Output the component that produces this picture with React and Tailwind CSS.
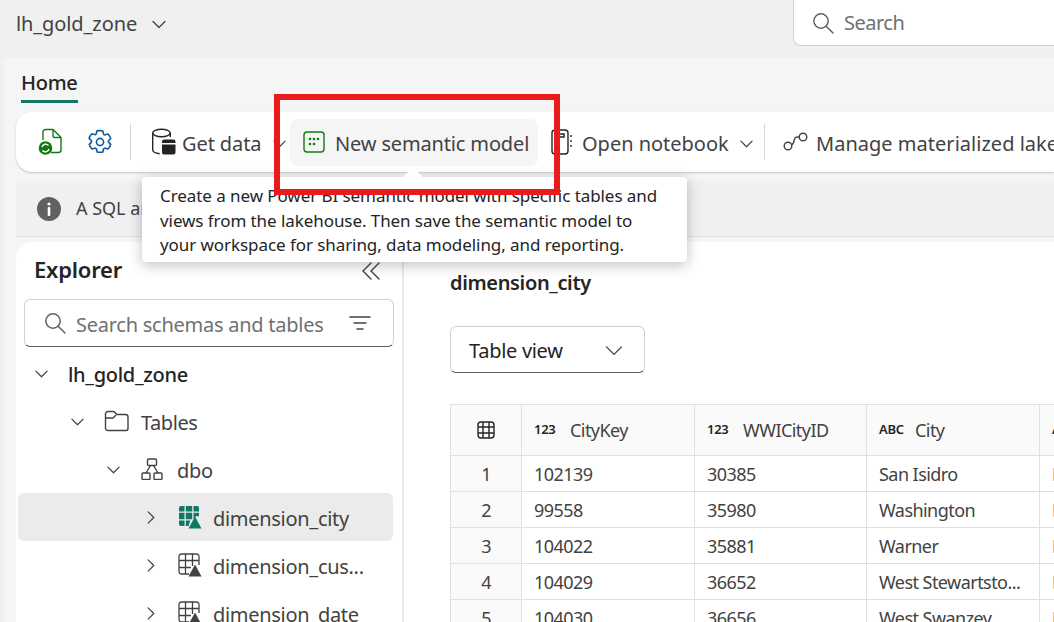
import React from "react";

const F = { fontFamily: '"Noto Sans", "Open Sans", sans-serif' };

function Chevron({ dir = "down", size = 16, className = "", sw = 1.3 }) {
  const d = { down: "M2 5.5l6 6 6-6", right: "M5.5 2l6 6-6 6" }[dir];
  return (
    <svg width={size} height={size} viewBox="0 0 16 16" fill="none" stroke="currentColor" strokeWidth={sw} className={className}>
      <path d={d} strokeLinecap="round" strokeLinejoin="round" />
    </svg>
  );
}

function SearchIcon({ className = "" }) {
  return (
    <svg width="22" height="22" viewBox="0 0 22 22" fill="none" stroke="#616161" strokeWidth="1.5" className={className}>
      <circle cx="9" cy="9" r="7.2" />
      <path d="M14.2 14.2L21 21" strokeLinecap="round" />
    </svg>
  );
}

function TableTri({ active }) {
  const c = active ? "#117865" : "#424242";
  return (
    <svg width="24" height="24" viewBox="0 0 24 24" className="shrink-0">
      {active ? (
        <g fill={c}>
          <path d="M1 3a2 2 0 012-2h3.500v5.500H1zM7.800 1h6.400v5.500H7.800zM15.500 1H19a2 2 0 012 2v3.500h-5.500zM1 7.800h5.500v6.400H1zM7.800 7.800h6.400v6.400H7.800zM15.500 7.800H21v3.500h-3l-2.500 3zM1 15.500h5.500V21H3a2 2 0 01-2-2zM7.800 15.500h4.500L10.500 21H7.800z" />
        </g>
      ) : (
        <g fill="none" stroke={c} strokeWidth="1.300">
          <path d="M11 21H3.500A2.500 2.500 0 011 18.500v-15A2.500 2.500 0 013.500 1h15A2.500 2.500 0 0121 3.500V12" />
          <path d="M1 7.500h20M1 14.500h12M7.500 1v20M14.500 1v12" />
        </g>
      )}
      <path d="M17 11.500l6.500 12h-13z" fill={c} />
    </svg>
  );
}

function TreeRow({ pad, children, selected }) {
  return (
    <div className={`flex h-12 shrink-0 items-center rounded-md ${selected ? "bg-[#ebebeb]" : ""}`} style={{ paddingLeft: pad }}>
      {children}
    </div>
  );
}

function HeadCell({ w, type, label }) {
  return (
    <div className="flex h-full shrink-0 items-center border-r border-[#e0e0e0] pl-[12px]" style={{ width: w }}>
      <span className="w-[36px] text-[13px] font-semibold tracking-[-0.3px] text-[#242424]">{type}</span>
      <span className="text-[18px] tracking-[-0.55px] text-[#424242]">{label}</span>
    </div>
  );
}

function Row({ n, a, b, c }) {
  return (
    <div className="flex h-9 shrink-0 border-b border-[#e0e0e0] text-[18px] tracking-[-0.55px] text-[#424242]">
      <div className="flex w-[71px] shrink-0 items-center justify-center border-r border-[#e0e0e0] bg-[#fafafa] pt-[2px]">{n}</div>
      <div className="flex w-[173px] shrink-0 items-center border-r border-[#e0e0e0] pl-[12px] pt-[2px]">{a}</div>
      <div className="flex w-[172px] shrink-0 items-center border-r border-[#e0e0e0] pl-[12px] pt-[2px]">{b}</div>
      <div className="flex w-[173px] shrink-0 items-center border-r border-[#e0e0e0] pl-[12px] pt-[2px]">{c}</div>
      <div className="flex flex-1 items-center pl-[12px] pt-[2px]">P</div>
    </div>
  );
}

export default function App() {
  return (
    <div className="relative h-[622px] w-[1054px] overflow-hidden bg-[#f0f0f0]" style={F}>
      {/* Top bar */}
      <header className="flex h-[58px] items-start justify-between">
        <div className="flex items-center pl-4 pt-[9px] text-[#424242]">
          <span className="text-[20px] tracking-[-0.1px]">lh_gold_zone</span>
          <Chevron className="ml-[14px] text-[#424242]" />
        </div>
        <div className="flex h-[46px] w-[261px] items-center rounded-bl-lg border-b border-l border-[#d1d1d1] bg-white pl-[18px]">
          <SearchIcon />
          <span className="ml-[10px] pt-[1px] text-[20px] tracking-[-0.5px] text-[#707070]">Search</span>
        </div>
      </header>

      {/* Workspace */}
      <div className="ml-1 h-[564px] bg-[#f5f5f5] pl-3">
        <div className="ml-[5px] h-[54px] pt-[10px]">
          <div className="inline-block h-[35px] border-b-[3px] border-[#117865] text-[20px] font-medium leading-[29px] tracking-[-0.25px] text-[#242424]">Home</div>
        </div>

        {/* Toolbar */}
        <div className="flex h-[60px] items-center overflow-hidden rounded-l-2xl bg-white pl-[22px] text-[#424242] shadow-[0_1px_2px_rgba(0,0,0,0.2)]">
          <svg width="24" height="28" viewBox="0 0 24 28" fill="none" className="shrink-0">
            <path d="M5 12V4a2.500 2.500 0 012.500-2.500H15l8 8V22a2.500 2.500 0 01-2.500 2.500H13" stroke="#107c10" strokeWidth="1.400" />
            <path d="M15 1.500V8a1.500 1.500 0 001.500 1.500H23" stroke="#107c10" strokeWidth="1.400" />
            <circle cx="7.500" cy="20" r="6.800" fill="#107c10" />
            <path d="M4 19a3.700 3.700 0 016.500-1.500M11 21a3.700 3.700 0 01-6.500 1.500" stroke="#fff" strokeWidth="1.400" fill="none" />
          </svg>
          <svg width="26" height="26" viewBox="0 0 24 24" fill="none" stroke="#0f5c9c" strokeWidth="1.500" strokeLinejoin="round" className="ml-[25px] shrink-0">
            <circle cx="12" cy="12" r="3.300" />
            <path d="M12 1.500c.9 0 1.800.1 2.600.3l.6 2.500c.2.700 1 1.200 1.700 1l2.500-.7c1.100 1.200 2 2.600 2.500 4.200l-1.800 1.800c-.5.500-.5 1.300 0 1.800l1.800 1.800c-.5 1.600-1.400 3-2.500 4.200l-2.500-.7c-.7-.2-1.500.3-1.700 1l-.6 2.500c-1.700.4-3.500.4-5.200 0l-.6-2.500c-.2-.7-1-1.200-1.700-1l-2.500.7c-1.100-1.200-2-2.600-2.500-4.200l1.800-1.800c.5-.5.5-1.300 0-1.800L1.900 8.600c.5-1.600 1.400-3 2.500-4.200l2.500.7c.7.2 1.500-.3 1.700-1l.6-2.500c.8-.2 1.700-.1 2.800-.1z" />
          </svg>
          <div className="ml-[17px] h-9 w-px shrink-0 bg-[#d6d6d6]" />
          <svg width="26" height="28" viewBox="0 0 26 28" className="ml-5 shrink-0">
            <g fill="none" stroke="#242424" strokeWidth="1.400">
              <ellipse cx="10.500" cy="5" rx="8.800" ry="3.800" />
              <path d="M1.700 5v17c0 1.800 2.500 3.200 7 3.700M19.300 5v4" />
            </g>
            <path d="M11 13.500a2 2 0 012-2h9.500a2 2 0 012 2V15H11zM11 16.500h13.500v8a2 2 0 01-2 2H13a2 2 0 01-2-2z" fill="#242424" />
          </svg>
          <span className="ml-[5px] w-[78px] shrink-0 whitespace-nowrap pt-[3px] text-[20px] tracking-[-0.1px]">Get data</span>
          <Chevron size={15} className="ml-3 mt-[3px] shrink-0" />
          <div className="ml-[3px] flex h-[47px] w-[248px] shrink-0 items-center rounded-lg bg-[#f5f5f5] pl-[13px]">
            <svg width="22" height="22" viewBox="0 0 22 22" className="shrink-0">
              <rect x="1" y="1" width="20" height="20" rx="3" fill="none" stroke="#107c10" strokeWidth="1.400" />
              <g fill="#107c10">
                <circle cx="7" cy="8" r="1.300" /><circle cx="11" cy="8" r="1.300" /><circle cx="15" cy="8" r="1.300" />
                <circle cx="7" cy="13" r="1.300" /><circle cx="11" cy="13" r="1.300" />
              </g>
            </svg>
            <span className="ml-[10px] whitespace-nowrap pt-[3px] text-[20px] tracking-[-0.15px]">New semantic model</span>
          </div>
          <svg width="21" height="26" viewBox="0 0 21 26" fill="none" stroke="#242424" strokeWidth="1.400" className="ml-[13px] shrink-0">
            <rect x="1" y="1" width="16" height="24" rx="3" />
            <path d="M5 5h8v3H5z" />
            <path d="M20 6v2M20 11v2M20 16v2" />
          </svg>
          <span className="ml-[10px] w-[147px] shrink-0 whitespace-nowrap pt-[3px] text-[20px] tracking-[-0.02px]">Open notebook</span>
          <Chevron size={15} className="ml-[10px] mt-[3px] shrink-0" />
          <div className="ml-[10px] h-9 w-px shrink-0 bg-[#d6d6d6]" />
          <svg width="25" height="20" viewBox="0 0 25 20" fill="none" stroke="#424242" strokeWidth="1.400" className="ml-[18px] shrink-0">
            <circle cx="5" cy="14" r="3.800" />
            <circle cx="20" cy="5" r="3.800" />
            <path d="M8.500 13c3-1 2-6 4-7.500 1.200-.8 2.500-.5 3.800-.5" />
          </svg>
          <span className="ml-[8px] shrink-0 whitespace-nowrap pt-[3px] text-[20px] tracking-[0.02px]">Manage materialized lake views</span>
        </div>

        {/* Info bar */}
        <div className="mt-[9px] flex h-[55px] items-center bg-[#f0f0f0] pl-[21px] text-[18px] text-[#424242]">
          <svg width="24" height="24" viewBox="0 0 24 24" className="shrink-0">
            <circle cx="12" cy="12" r="12" fill="#616161" />
            <circle cx="12" cy="7" r="1.600" fill="#fff" />
            <rect x="10.700" y="10" width="2.600" height="9" rx="1" fill="#fff" />
          </svg>
          <span className="ml-[15px] whitespace-nowrap">A SQL analytics endpoint is available for querying this lakehouse</span>
        </div>
        <div className="h-px bg-[#e0e0e0]" />

        {/* Panels */}
        <div className="mt-[5px] flex h-[385px]">
          <aside className="flex w-[388px] shrink-0 flex-col overflow-hidden rounded-tl-2xl border-r-2 border-[#ebebeb] bg-white px-2">
            <div className="flex h-[57px] shrink-0 items-center justify-between pb-[3px] pl-[10px] pr-[14px]">
              <span className="text-[22px] font-semibold tracking-[-0.2px] text-[#242424]">Explorer</span>
              <svg width="18" height="18" viewBox="0 0 18 18" fill="none" stroke="#424242" strokeWidth="1.400" strokeLinecap="round" className="mt-[3px]">
                <path d="M9 1L1 9l8 8M17 1L9 9l8 8" />
              </svg>
            </div>
            <div className="flex h-12 shrink-0 items-center rounded-md border border-[#d1d1d1] border-b-[#616161] pl-[19px] pr-[22px]">
              <SearchIcon />
              <span className="ml-[10px] flex-1 whitespace-nowrap pt-[3px] text-[20px] tracking-[-0.25px] text-[#707070]">Search schemas and tables</span>
              <svg width="22" height="16" viewBox="0 0 22 16" stroke="#424242" strokeWidth="1.400" strokeLinecap="round">
                <path d="M1 2h20M5 8h12M8 14h6" />
              </svg>
            </div>
            <div className="mt-[2px] flex flex-col text-[20px] tracking-[-0.3px] text-[#424242]">
              <TreeRow pad={10}>
                <Chevron size={15} />
                <span className="ml-[19px] pt-[4px] font-medium text-[#242424]">lh_gold_zone</span>
              </TreeRow>
              <TreeRow pad={46}>
                <Chevron size={15} />
                <svg width="26" height="22" viewBox="0 0 26 22" fill="none" stroke="#424242" strokeWidth="1.400" className="ml-[19px] shrink-0">
                  <path d="M1.500 4a2.500 2.500 0 012.500-2.500h5c1 0 1.500.5 2 1l2 2h8.500A2.500 2.500 0 0124 7v11.500a2 2 0 01-2 2H4a2.500 2.500 0 01-2.500-2.500zM1.500 8H9l3-3" />
                </svg>
                <span className="ml-[11px] pt-[4px] tracking-[-0.45px]">Tables</span>
              </TreeRow>
              <TreeRow pad={82}>
                <Chevron size={15} />
                <svg width="22" height="22" viewBox="0 0 22 22" fill="none" stroke="#424242" strokeWidth="1.400" className="ml-[20px] shrink-0">
                  <rect x="6.500" y="1" width="9" height="6.500" rx="1" />
                  <rect x="1" y="15" width="8" height="6.500" rx="1" />
                  <rect x="13" y="15" width="8" height="6.500" rx="1" />
                  <path d="M9.500 7.500L5 15M12.500 7.500L17 15" />
                </svg>
                <span className="ml-[14px] pt-[4px]">dbo</span>
              </TreeRow>
              <div className="-ml-[6px] mr-[1px]">
                <TreeRow pad={125} selected>
                  <Chevron dir="right" size={15} />
                  <span className="ml-[20px]"><TableTri active /></span>
                  <span className="ml-[11px] pt-[4px]">dimension_city</span>
                </TreeRow>
                <TreeRow pad={125}>
                  <Chevron dir="right" size={15} />
                  <span className="ml-[20px]"><TableTri /></span>
                  <span className="ml-[11px] pt-[4px]">dimension_cus...</span>
                </TreeRow>
                <TreeRow pad={125}>
                  <Chevron dir="right" size={15} />
                  <span className="ml-[20px]"><TableTri /></span>
                  <span className="ml-[11px] pt-[4px]">dimension_date</span>
                </TreeRow>
              </div>
            </div>
          </aside>

          <main className="flex-1 overflow-hidden bg-white pl-[46px] pt-[27px]">
            <div className="h-[28px] text-[20px] font-semibold leading-[28px] tracking-[-0.35px] text-[#242424]">dimension_city</div>
            <div className="mt-[29px] flex h-[47px] w-[195px] items-center justify-between rounded-md border border-[#d1d1d1] border-b-[#616161] pl-[18px] pr-[20px]">
              <span className="pt-[2px] text-[20px] tracking-[-0.3px] text-[#242424]">Table view</span>
              <Chevron size={20} sw={1.1} className="text-[#424242]" />
            </div>
            <div className="mt-[31px] border-l border-t border-[#e0e0e0]">
              <div className="flex h-[51px] border-b border-[#e0e0e0] bg-[#fafafa]">
                <div className="flex h-full w-[71px] shrink-0 items-center justify-center border-r border-[#e0e0e0]">
                  <svg width="18" height="18" viewBox="0 0 18 18" fill="none" stroke="#242424" strokeWidth="1.400">
                    <rect x="1" y="1" width="16" height="16" rx="3" />
                    <path d="M1 6h16M1 12h16M6 1v16M12 1v16" />
                  </svg>
                </div>
                <HeadCell w={173} type="123" label="CityKey" />
                <HeadCell w={172} type="123" label="WWICityID" />
                <HeadCell w={173} type="ABC" label="City" />
                <div className="flex flex-1 items-center pl-[12px] text-[13px] font-semibold text-[#242424]">ABC</div>
              </div>
              <Row n="1" a="102139" b="30385" c="San Isidro" />
              <Row n="2" a="99558" b="35980" c="Washington" />
              <Row n="3" a="104022" b="35881" c="Warner" />
              <Row n="4" a="104029" b="36652" c="West Stewartsto..." />
              <Row n="5" a="104030" b="36656" c="West Swanzey" />
            </div>
          </main>
        </div>
      </div>

      {/* Tooltip over content */}
      <div className="absolute left-[142px] top-[177px] h-[85px] w-[545px] rounded-sm bg-white px-[18px] py-[7px] text-[17px] leading-[24.5px] tracking-[-0.07px] text-[#242424] shadow-[0_3px_14px_rgba(0,0,0,0.25)]">
        <span className="block whitespace-nowrap">Create a new Power BI semantic model with specific tables and</span>
        <span className="block whitespace-nowrap">views from the lakehouse. Then save the semantic model to</span>
        <span className="block whitespace-nowrap">your workspace for sharing, data modeling, and reporting.</span>
        <div className="absolute left-[264px] top-[-7px] h-[14px] w-[14px] rotate-45 bg-white" />
      </div>

      {/* Red annotation */}
      <div className="absolute left-[274px] top-[94px] h-[101px] w-[286px] border-[6px] border-[#e81c1c]" />
    </div>
  );
}
